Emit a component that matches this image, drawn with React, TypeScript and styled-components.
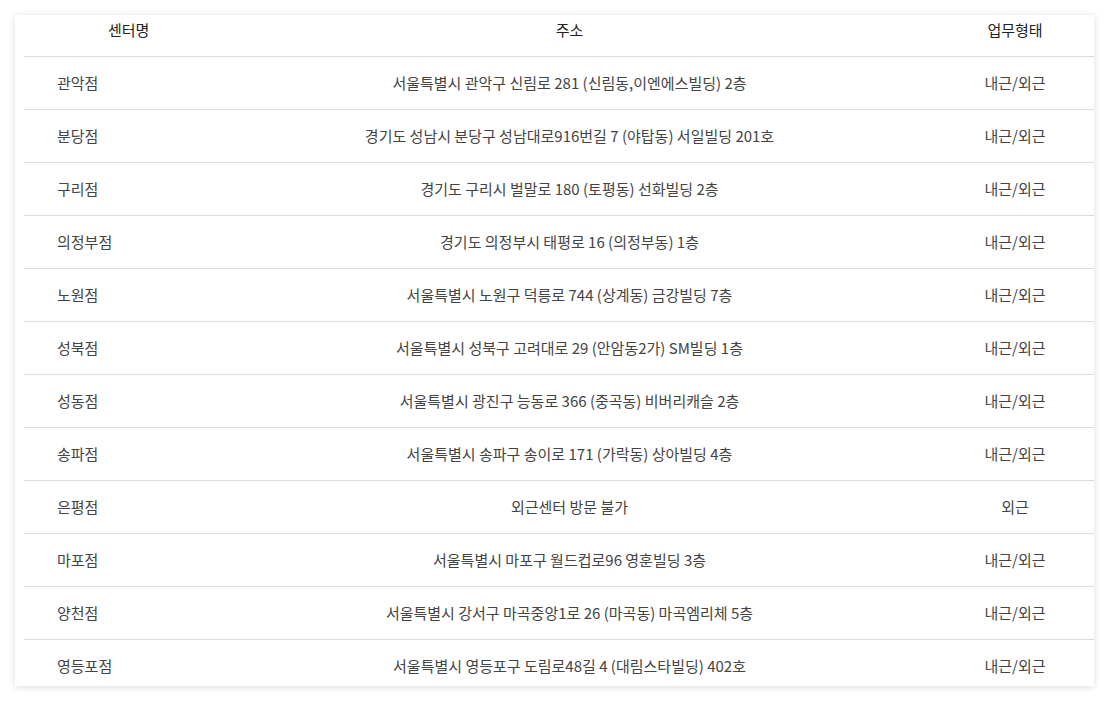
import React from "react";
import styled, { createGlobalStyle } from "styled-components";

const GlobalStyle = createGlobalStyle`
  html, body { margin: 0; padding: 0; background: #ffffff; }
  body { font-family: "Noto Sans CJK KR", "Noto Sans", sans-serif; }
  *, *::before, *::after { box-sizing: border-box; }
`;

const Page = styled.div`
  padding: 15px 15px 14px 15px;
  width: 1109px;
`;

const Card = styled.div`
  background: #fff;
  box-shadow: 0 1px 7px rgba(0, 0, 0, 0.15);
  padding-left: 9px;
`;

const Table = styled.table`
  width: 100%;
  border-collapse: collapse;
  table-layout: fixed;
  font-size: 15px;
`;

const Th = styled.th<{ $w?: number; $padLeft?: number; $align?: string }>`
  width: ${(p) => (p.$w ? `${p.$w}px` : "auto")};
  height: 41px;
  padding: 5px 0 0 ${(p) => p.$padLeft ?? 0}px;
  text-align: ${(p) => p.$align ?? "center"};
  font-weight: 400;
  color: #222;
  border-bottom: 1px solid #dcdcdc;
  vertical-align: top;
  line-height: 20px;
`;

const Tr = styled.tr<{ $last?: boolean }>`
  & > td {
    border-bottom: ${(p) => (p.$last ? "none" : "1px solid #dcdcdc")};
    height: ${(p) => (p.$last ? "47px" : "53px")};
    vertical-align: ${(p) => (p.$last ? "top" : "middle")};
    padding-top: ${(p) => (p.$last ? "16px" : "0")};
  }
`;

const Td = styled.td<{ $align?: string; $padLeft?: number }>`
  padding-left: ${(p) => p.$padLeft ?? 0}px;
  padding-right: 0;
  padding-bottom: 0;
  text-align: ${(p) => p.$align ?? "center"};
  color: #444;
  line-height: 20px;
`;

const rows: [string, string, string][] = [
  ["관악점", "서울특별시 관악구 신림로 281 (신림동,이엔에스빌딩) 2층", "내근/외근"],
  ["분당점", "경기도 성남시 분당구 성남대로916번길 7 (야탑동) 서일빌딩 201호", "내근/외근"],
  ["구리점", "경기도 구리시 벌말로 180 (토평동) 선화빌딩 2층", "내근/외근"],
  ["의정부점", "경기도 의정부시 태평로 16 (의정부동) 1층", "내근/외근"],
  ["노원점", "서울특별시 노원구 덕릉로 744 (상계동) 금강빌딩 7층", "내근/외근"],
  ["성북점", "서울특별시 성북구 고려대로 29 (안암동2가) SM빌딩 1층", "내근/외근"],
  ["성동점", "서울특별시 광진구 능동로 366 (중곡동) 비버리캐슬 2층", "내근/외근"],
  ["송파점", "서울특별시 송파구 송이로 171 (가락동) 상아빌딩 4층", "내근/외근"],
  ["은평점", "외근센터 방문 불가", "외근"],
  ["마포점", "서울특별시 마포구 월드컵로96 영훈빌딩 3층", "내근/외근"],
  ["양천점", "서울특별시 강서구 마곡중앙1로 26 (마곡동) 마곡엠리체 5층", "내근/외근"],
  ["영등포점", "서울특별시 영등포구 도림로48길 4 (대림스타빌딩) 402호", "내근/외근"],
];

export default function App() {
  return (
    <>
      <GlobalStyle />
      <Page>
        <Card>
          <Table>
            <thead>
              <tr>
                <Th $w={179} $align="left" $padLeft={84}>
                  센터명
                </Th>
                <Th>주소</Th>
                <Th $w={158}>업무형태</Th>
              </tr>
            </thead>
            <tbody>
              {rows.map((r, i) => (
                <Tr key={r[0]} $last={i === rows.length - 1}>
                  <Td $align="left" $padLeft={33}>
                    {r[0]}
                  </Td>
                  <Td>{r[1]}</Td>
                  <Td>{r[2]}</Td>
                </Tr>
              ))}
            </tbody>
          </Table>
        </Card>
      </Page>
    </>
  );
}
